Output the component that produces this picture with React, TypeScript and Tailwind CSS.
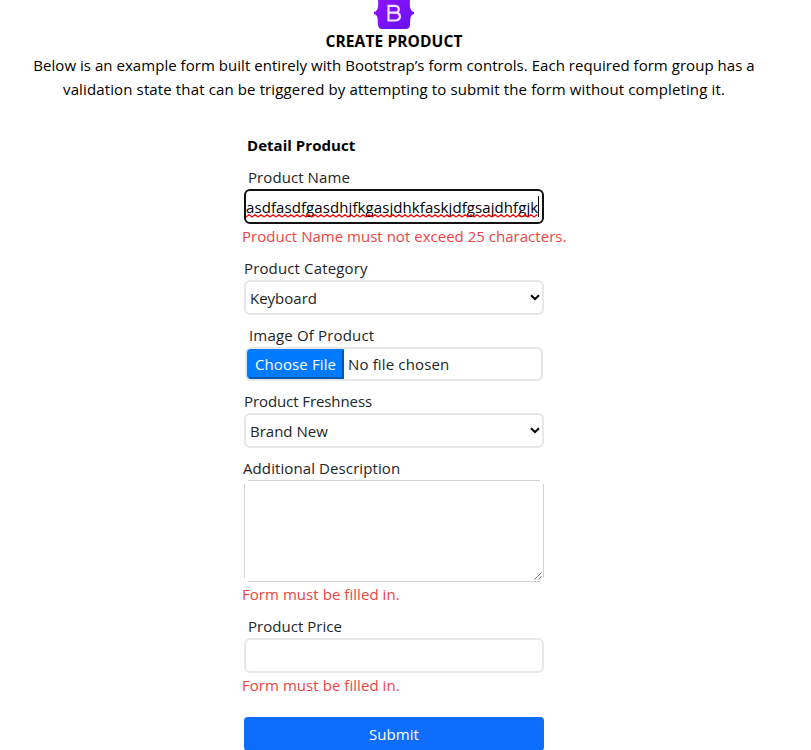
import type { ReactNode } from "react";

function T({ className = "", children }: { className?: string; children: ReactNode }) {
  return <span className={`inline-block whitespace-nowrap ${className}`}>{children}</span>;
}

function Chevron() {
  return (
    <svg className="pointer-events-none ml-auto" width="10" height="7" viewBox="0 0 10 7" fill="none">
      <path d="M1 1.2 L5 5 L9 1.2" stroke="#000" strokeWidth="2" />
    </svg>
  );
}

function Select({ children }: { children: ReactNode }) {
  return (
    <div className="flex h-[35px] items-center rounded-md border-2 border-[#e5e7eb] pl-1 pr-0.5">
      {children}
      <Chevron />
    </div>
  );
}

function Label({ className = "", children }: { className?: string; children: ReactNode }) {
  return <label className={`mt-2 h-6 whitespace-nowrap ${className}`}>{children}</label>;
}

function ErrorText({ className = "", children }: { className?: string; children: ReactNode }) {
  return <p className={`-ml-0.5 whitespace-nowrap text-[#ef4444] ${className}`}>{children}</p>;
}

export default function App() {
  return (
    <main className="h-[750px] w-[811px] overflow-hidden bg-white font-['Open_Sans','Noto_Sans',sans-serif] text-[15px] leading-6 text-[#212529]">
      <div className="w-[788px]">
        <header className="flex flex-col items-center text-black">
          <svg width="40" height="29" viewBox="0 0 40 29">
            <defs>
              <linearGradient id="logo" x1="0" y1="0" x2="1" y2="1">
                <stop offset="0" stopColor="#9013fe" />
                <stop offset="1" stopColor="#6610f2" />
              </linearGradient>
            </defs>
            <path d="M4 0H36C35.5 5 35.5 11 40 12V14C35.5 15 36.5 20 36 25Q35.500 29 32 29H8Q4.500 29 4 25C3.500 20 4.500 15 0 14V12C4.500 11 4.500 5 4 0Z" fill="url(#logo)" />
            <path d="M14.500 5.800H20.700Q24.800 5.800 24.800 9.200Q24.800 12.600 20.700 12.600H14.500M20.700 12.600Q25.900 12.600 25.900 16.600Q25.900 20.500 20.700 20.500H14.500V4.700" fill="none" stroke="#f3e8ff" strokeWidth="2.200" />
          </svg>
          <h1 className="pt-px text-[15.5px] font-bold leading-[23px] tracking-[0.11px]"><T>CREATE PRODUCT</T></h1>
          <p className="flex flex-col items-center">
            <T className="tracking-[0.04px]">Below is an example form built entirely with Bootstrap’s form controls. Each required form group has a</T>
            <T className="tracking-[0.128px]">validation state that can be triggered by attempting to submit the form without completing it.</T>
          </p>
        </header>
        <form className="mx-auto mt-8 flex w-[300px] flex-col">
          <h2 className="ml-[3px] font-bold tracking-[0.04px] text-black">Detail Product</h2>
          <Label className="ml-1 tracking-[0.08px]">Product Name</Label>
          <div className="relative flex h-[35px] items-center rounded-md border-2 border-[#111] text-black">
            <T className="tracking-[0.085px]">asdfasdfgasdhjfkgasjdhkfaskjdfgsajdhfgjk</T>
            <svg className="absolute left-0 top-[23px]" width="291" height="4">
              <defs>
                <pattern id="spelling" width="6" height="4" patternUnits="userSpaceOnUse">
                  <path d="M-1.500 1.750 L0 3 L3 0.700 L6 3 L7.500 1.750" fill="none" stroke="#f00" strokeWidth="1.200" />
                </pattern>
              </defs>
              <rect width="291" height="4" fill="url(#spelling)" />
            </svg>
            <span className="absolute left-[292px] top-[5px] h-[21px] w-px bg-black" />
          </div>
          <ErrorText className="tracking-[0.02px]">Product Name must not exceed 25 characters.</ErrorText>
          <Label className="tracking-[0.14px]">Product Category</Label>
          <Select><T>Keyboard</T></Select>
          <Label className="ml-[5px] tracking-[0.17px]">Image Of Product</Label>
          <div className="ml-px flex h-[34px] w-[298px] items-center rounded-md border-2 border-[#e5e7eb]">
            <button type="button" className="flex h-[30px] w-[97px] items-center justify-center rounded-l-sm border-2 border-b-[#0056b3] border-l-[#007bff] border-r-[#0056b3] border-t-[#007bff] bg-[#007bff] text-white">
              <T className="tracking-[0.12px]">Choose File</T>
            </button>
            <T className="ml-1 tracking-[0.15px]">No file chosen</T>
          </div>
          <Label className="tracking-[-0.09px]">Product Freshness</Label>
          <Select><T>Brand New</T></Select>
          <Label className="-ml-px tracking-[0.1px]">Additional Description</Label>
          <div className="relative h-[102px]">
            <textarea className="block h-full w-full resize-none border border-[#d1d5db]" />
            <span className="absolute left-0 top-0 size-1 bg-white" />
            <span className="absolute right-0 top-0 size-1 bg-white" />
            <span className="absolute bottom-0 left-0 size-1 bg-white" />
            <span className="absolute bottom-0 right-0 size-1 bg-white" />
            <svg className="absolute bottom-0.5 right-0.5" width="8" height="8" viewBox="0 0 8 8">
              <path d="M0.500 7.500 L7.500 0.500 M4.500 7.500 L7.500 4.500" stroke="#555" strokeWidth="0.800" fill="none" />
            </svg>
          </div>
          <ErrorText className="tracking-[0.05px]">Form must be filled in.</ErrorText>
          <Label className="ml-1 tracking-[0.04px]">Product Price</Label>
          <input className="h-[35px] rounded-md border-2 border-[#e5e7eb]" />
          <ErrorText className="tracking-[0.05px]">Form must be filled in.</ErrorText>
          <button type="button" className="mt-5 h-[34px] rounded bg-[#0d6efd] tracking-[0.08px] text-white">Submit</button>
        </form>
      </div>
    </main>
  );
}
